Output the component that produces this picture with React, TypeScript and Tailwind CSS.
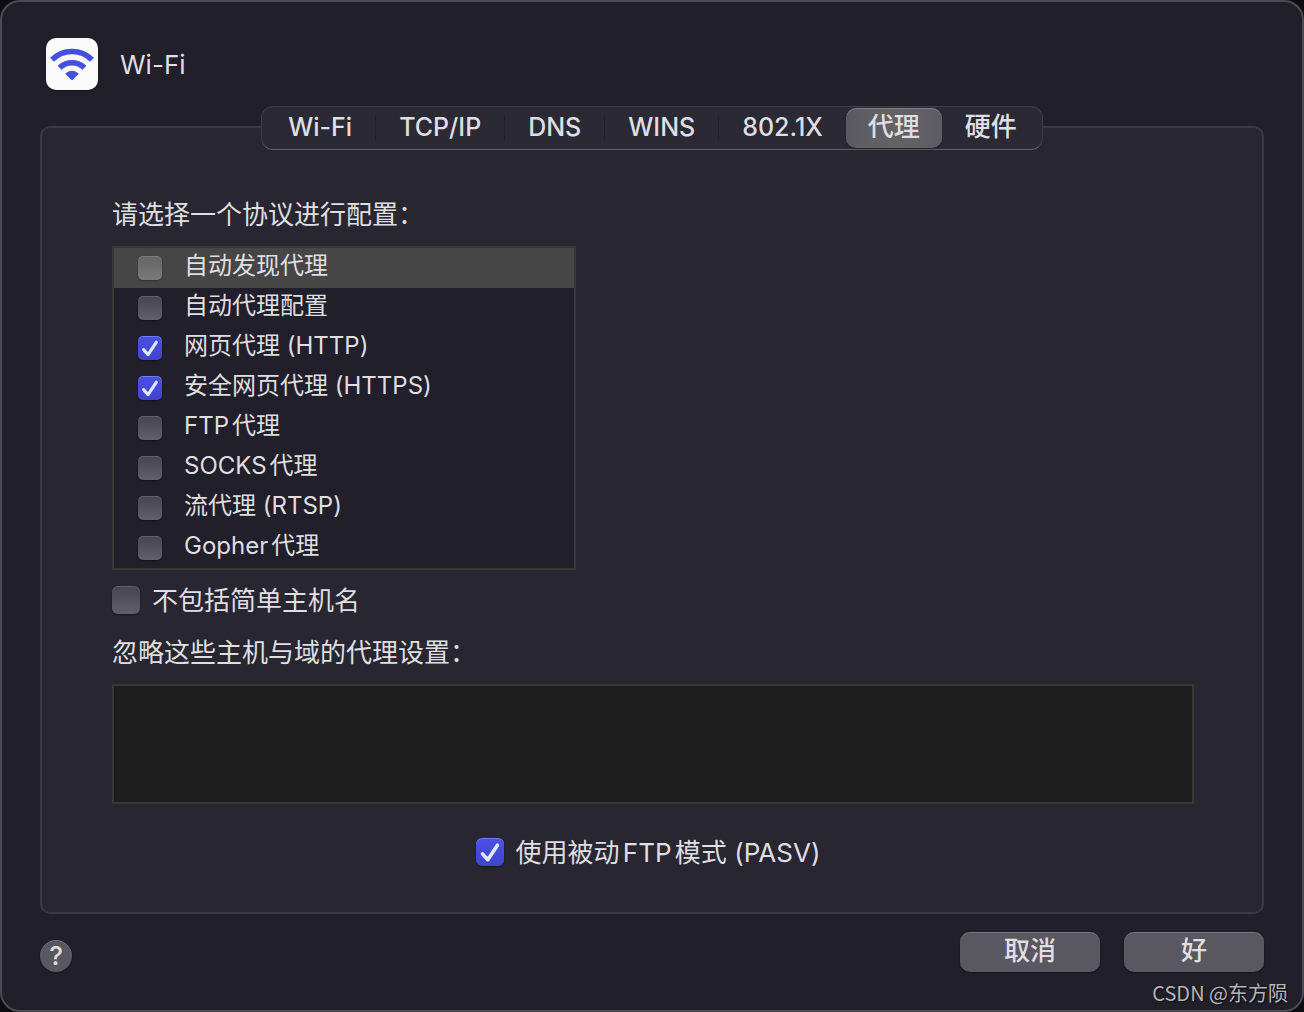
import { useState } from "react";
import type { ReactNode } from "react";

type Protocol = { id: string; name: string; on: boolean };

const LATIN_TABS = ["Wi-Fi", "TCP/IP", "DNS", "WINS", "802.1X"];
const TABS = [...LATIN_TABS, "代理", "硬件"];

const PROTOCOLS: Protocol[] = [
  { id: "discovery", name: "自动发现代理", on: false },
  { id: "auto", name: "自动代理配置", on: false },
  { id: "http", name: "网页代理 (HTTP)", on: true },
  { id: "https", name: "安全网页代理 (HTTPS)", on: true },
  { id: "ftp", name: "FTP代理", on: false },
  { id: "socks", name: "SOCKS代理", on: false },
  { id: "rtsp", name: "流代理 (RTSP)", on: false },
  { id: "gopher", name: "Gopher代理", on: false },
];

function WifiIcon() {
  return (
    <span className="flex size-[52px] shrink-0 items-center justify-center rounded-[10px] bg-[#fafafb] shadow-[0_1px_2px_rgba(0,0,0,0.5)]">
      <svg viewBox="0 0 52 52" className="size-[52px]" aria-hidden="true">
        <g fill="none" stroke="#4450de" strokeWidth="5.6">
          <path d="M6 21.8a28.4 28.4 0 0 1 40 0" />
          <path d="M13.6 29.8a17.6 17.6 0 0 1 24.8 0" />
        </g>
        <path
          d="M19.9 36.6q-.9-.9.1-1.7a10 10 0 0 1 12 0q1 .8.1 1.7l-5.3 5.1q-.8.8-1.6 0z"
          fill="#4450de"
        />
      </svg>
    </span>
  );
}

function Check({
  checked,
  onChange,
  large,
  bright,
  children,
}: {
  checked: boolean;
  onChange: (value: boolean) => void;
  large?: boolean;
  bright?: boolean;
  children: ReactNode;
}) {
  const size = large ? "size-7 rounded-md" : "size-6 rounded-[5px]";
  const tone = checked
    ? "bg-linear-to-b from-[#4a50e8] to-[#4044cc] shadow-[inset_0_1px_0_rgba(255,255,255,0.25),0_1px_2px_rgba(0,0,0,0.4)]"
    : bright
      ? "bg-linear-to-b from-[#656565] to-[#7a7a7a] shadow-[inset_0_1px_0_rgba(255,255,255,0.15),0_1px_2px_rgba(0,0,0,0.3)]"
      : "bg-linear-to-b from-[#46444e] to-[#615f69] shadow-[inset_0_1px_0_rgba(255,255,255,0.15),0_1px_2px_rgba(0,0,0,0.4)]";
  return (
    <label className={`flex items-center ${large ? "gap-3" : "gap-[22px]"}`}>
      <span className={`relative shrink-0 ${size} ${tone}`}>
        <input
          type="checkbox"
          checked={checked}
          onChange={(e) => onChange(e.target.checked)}
          className="block size-full appearance-none"
        />
        {checked && (
          <svg viewBox="0 0 24 24" className="pointer-events-none absolute inset-0 size-full" aria-hidden="true">
            <path
              d="M5.6 13.6l4.5 5L18.4 6.2"
              fill="none"
              stroke="#e0eaff"
              strokeWidth="3.1"
              strokeLinecap="round"
              strokeLinejoin="round"
            />
          </svg>
        )}
      </span>
      <span className={large ? "pt-0.5" : "pb-1"}>{children}</span>
    </label>
  );
}

export default function App() {
  const [tab, setTab] = useState("代理");
  const [protocols, setProtocols] = useState(PROTOCOLS);
  const [simple, setSimple] = useState(false);
  const [passive, setPassive] = useState(true);

  return (
    <div className="min-h-screen bg-[#0e0d12] font-['Inter','Noto_Sans_CJK_SC',sans-serif] text-[26px] leading-9 text-[#dfdee1] [text-autospace:normal]">
      <main className="relative flex min-h-screen flex-col rounded-[20px] border-2 border-[#4c4b52] bg-[#211f29] px-[38px] pt-9 pb-[38px]">
        <header className="flex items-center gap-[22px] pl-1.5">
          <WifiIcon />
          <h1 className="pt-0.5">Wi-Fi</h1>
        </header>

        <nav
          role="tablist"
          className="relative z-10 mt-4 -mb-6 flex h-11 items-center self-center rounded-xl border border-[#403e48] border-b-[#63616b] bg-[#2b2933] pr-0.5 pl-[3px] font-medium"
        >
          {TABS.map((name, i) => (
            <div key={name} className="flex items-center">
              {i > 0 && i < 5 && <span className="h-6 w-px bg-[#222029]" />}
              <button
                type="button"
                role="tab"
                aria-selected={tab === name}
                onClick={() => setTab(name)}
                className={`flex h-10 items-center pb-0.5 ${LATIN_TABS.includes(name) ? "text-[25px]" : "text-[26px]"} ${
                  tab === name
                    ? "rounded-[10px] bg-linear-to-r from-[#5b5a63] via-[#636363] to-[#5d5c66] px-[22px] shadow-[inset_0_1px_0_rgba(255,255,255,0.2),0_1px_2px_rgba(0,0,0,0.3)]"
                    : "px-[23px]"
                }`}
              >
                {name}
              </button>
            </div>
          ))}
        </nav>

        <section className="flex flex-1 flex-col rounded-[10px] border-2 border-[#3b3943] bg-[#282630] pt-[69px] pr-[68px] pb-[41px] pl-[70px]">
          <h2>请选择一个协议进行配置：</h2>
          <ul className="mt-[13px] w-full max-w-[464px] border-2 border-[#383838] bg-[#211f29] text-2xl leading-9">
            {protocols.map((p, i) => (
              <li key={p.id} className={i === 0 ? "bg-[#464646] pl-6" : "pl-6"}>
                <Check
                  checked={p.on}
                  bright={i === 0}
                  onChange={(on) => setProtocols(protocols.map((q) => (q.id === p.id ? { ...q, on } : q)))}
                >
                  {p.name}
                </Check>
              </li>
            ))}
          </ul>
          <div className="mt-[11px] flex">
            <Check large checked={simple} onChange={setSimple}>
              不包括简单主机名
            </Check>
          </div>
          <label htmlFor="bypass" className="mt-4">
            忽略这些主机与域的代理设置：
          </label>
          <textarea
            id="bypass"
            className="mt-[13px] block min-h-[118px] w-full flex-1 resize-none border-2 border-[#373737] bg-[#1e1e1e] px-2 text-2xl outline-none"
          />
          <div className="mt-[29px] flex justify-center pr-2.5">
            <Check large checked={passive} onChange={setPassive}>
              使用被动FTP模式 (PASV)
            </Check>
          </div>
        </section>

        <footer className="mt-[18px] flex items-end justify-between">
          <button
            type="button"
            aria-label="帮助"
            className="flex size-8 items-center justify-center rounded-full bg-[#59575f] font-medium shadow-[inset_0_1px_0_rgba(255,255,255,0.15),0_1px_2px_rgba(0,0,0,0.4)]"
          >
            ?
          </button>
          <div className="flex gap-6 font-medium">
            {["取消", "好"].map((name) => (
              <button
                key={name}
                type="button"
                className="flex h-10 w-[140px] items-center justify-center rounded-[10px] bg-[#59575f] pb-0.5 shadow-[inset_0_1px_0_rgba(255,255,255,0.2),0_1px_2px_rgba(0,0,0,0.4)]"
              >
                {name}
              </button>
            ))}
          </div>
        </footer>

        <p className="absolute right-3.5 bottom-[3px] font-['Noto_Sans_CJK_SC',sans-serif] text-xl leading-7 text-[#b5b5b9] [text-autospace:no-autospace] [text-shadow:1px_1px_1px_rgba(0,0,0,0.8)]">
          CSDN @东方陨
        </p>
      </main>
    </div>
  );
}
